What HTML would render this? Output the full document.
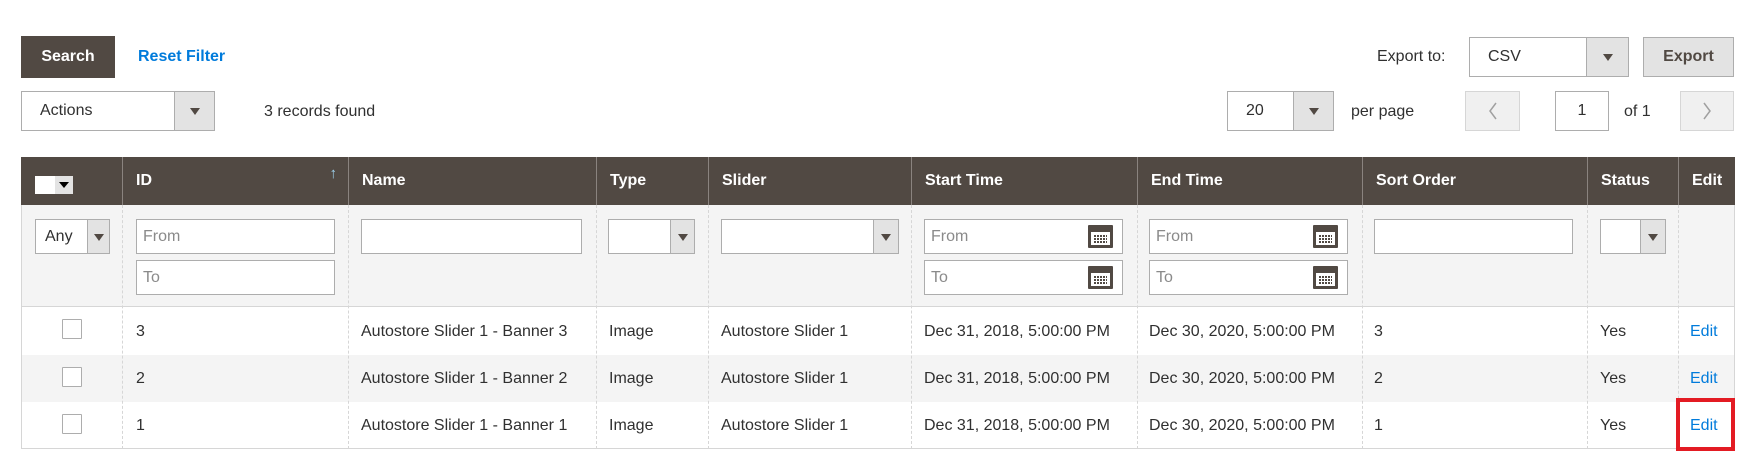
<!DOCTYPE html>
<html><head><meta charset="utf-8"><style>
*{box-sizing:border-box;margin:0;padding:0}
body{width:1758px;height:472px;background:#fff;font-family:"Liberation Sans",sans-serif;font-size:16px;color:#303030;position:relative;overflow:hidden}
.a{position:absolute}
.btn{position:absolute;display:flex;align-items:center;justify-content:center;font-weight:bold}
.sel{position:absolute;background:#fff;border:1px solid #adadad}
.sel .ar{position:absolute;top:0;right:0;bottom:0;background:#e3e3e3;border-left:1px solid #adadad}
.sel .ar:after{content:"";position:absolute;left:50%;top:50%;margin:-3px 0 0 -5px;border-left:5px solid transparent;border-right:5px solid transparent;border-top:7px solid #514943}
.sel .t{position:absolute;top:0;bottom:0;display:flex;align-items:center}
.inp{position:absolute;background:#fff;border:1px solid #adadad;height:35px;display:flex;align-items:center;padding-left:6px;color:#8a8a8a}
.cal{position:absolute;right:9px;top:5px;width:25px;height:23px;background:#514943;border-radius:1px}
.cal:before{content:"";position:absolute;left:3px;right:3px;top:7px;bottom:3px;background:#fff}
.cal:after{content:"";position:absolute;left:6px;top:10px;width:13px;height:8px;background:repeating-linear-gradient(90deg,#514943 0 2px,transparent 2px 3px),#fff;-webkit-mask:repeating-linear-gradient(0deg,#000 0 2px,transparent 2px 3px);mask:repeating-linear-gradient(0deg,#000 0 2px,transparent 2px 3px)}
.hd{position:absolute;top:157px;height:48px;background:#514943;color:#fff;font-weight:bold;display:flex;align-items:center;padding-left:13px;border-left:1px solid #8a837f}
.vl{position:absolute;top:205px;height:244px;border-left:1px dashed #d6d6d6}
.cell{position:absolute;display:flex;align-items:center;height:47px}
.cb{position:absolute;width:20px;height:20px;border:1px solid #adadad;background:#fff;border-radius:1px}
.lnk{color:#007bdb}
</style></head><body>
<div class="btn" style="left:21px;top:36px;width:94px;height:42px;background:#514943;color:#fff">Search</div>
<div class="a lnk" style="left:138px;top:48px;font-weight:bold">Reset Filter</div>
<div class="sel" style="left:21px;top:91px;width:194px;height:40px"><div class="t" style="left:18px">Actions</div><div class="ar" style="width:40px"></div></div>
<div class="a" style="left:264px;top:103px">3 records found</div>

<div class="a" style="left:1377px;top:48px">Export to:</div>
<div class="sel" style="left:1469px;top:37px;width:160px;height:40px"><div class="t" style="left:18px">CSV</div><div class="ar" style="width:42px"></div></div>
<div class="btn" style="left:1643px;top:37px;width:91px;height:40px;background:#e3e3e3;border:1px solid #adadad;color:#514943">Export</div>

<div class="sel" style="left:1227px;top:91px;width:107px;height:40px"><div class="t" style="left:18px">20</div><div class="ar" style="width:40px"></div></div>
<div class="a" style="left:1351px;top:103px">per page</div>
<div class="btn" style="left:1465px;top:91px;width:55px;height:40px;background:#f0f0f0;border:1px solid #d6d6d6"><svg width="10" height="18"><path d="M8 1 L2 9 L8 17" fill="none" stroke="#a0a0a0" stroke-width="1.5"/></svg></div>
<div class="btn" style="left:1555px;top:91px;width:54px;height:40px;background:#fff;border:1px solid #adadad;font-weight:normal">1</div>
<div class="a" style="left:1624px;top:103px">of 1</div>
<div class="btn" style="left:1680px;top:91px;width:54px;height:40px;background:#f0f0f0;border:1px solid #d6d6d6"><svg width="10" height="18"><path d="M2 1 L8 9 L2 17" fill="none" stroke="#a0a0a0" stroke-width="1.5"/></svg></div>

<div class="a" style="left:21px;top:157px;width:1714px;height:292px;border:1px solid #d6d6d6;border-top:none"></div>
<div class="a" style="left:21px;top:205px;width:1714px;height:102px;background:#f4f4f4;border-left:1px solid #d6d6d6;border-right:1px solid #d6d6d6"></div>
<div class="a" style="left:21px;top:355px;width:1714px;height:47px;background:#f4f4f4;border-left:1px solid #d6d6d6;border-right:1px solid #d6d6d6"></div>
<div class="a" style="left:21px;top:306px;width:1714px;border-top:1px solid #d6d6d6"></div>

<div class="hd" style="left:21px;width:102px;border-left:none"><div style="position:absolute;left:14px;top:19px;width:20px;height:18px;background:#fff"></div><div style="position:absolute;left:34px;top:19px;width:18px;height:18px;background:#e3e3e3"><div style="position:absolute;left:4px;top:6px;border-left:5px solid transparent;border-right:5px solid transparent;border-top:6px solid #000"></div></div></div>
<div class="hd" style="left:122px;width:227px">ID<span style="position:absolute;right:12px;top:8px;color:#9fd3f0;font-weight:normal;font-size:15px">&#8593;</span></div>
<div class="hd" style="left:348px;width:248px">Name</div>
<div class="hd" style="left:596px;width:112px">Type</div>
<div class="hd" style="left:708px;width:203px">Slider</div>
<div class="hd" style="left:911px;width:226px">Start Time</div>
<div class="hd" style="left:1137px;width:225px">End Time</div>
<div class="hd" style="left:1362px;width:225px">Sort Order</div>
<div class="hd" style="left:1587px;width:91px">Status</div>
<div class="hd" style="left:1678px;width:57px">Edit</div>

<div class="vl" style="left:122px"></div><div class="vl" style="left:348px"></div><div class="vl" style="left:596px"></div><div class="vl" style="left:708px"></div><div class="vl" style="left:911px"></div><div class="vl" style="left:1137px"></div><div class="vl" style="left:1362px"></div><div class="vl" style="left:1587px"></div><div class="vl" style="left:1678px"></div>

<div class="sel" style="left:35px;top:219px;width:75px;height:35px"><div class="t" style="left:9px;color:#303030">Any</div><div class="ar" style="width:22px"></div></div>
<div class="inp" style="left:136px;top:219px;width:199px">From</div>
<div class="inp" style="left:136px;top:260px;width:199px">To</div>
<div class="inp" style="left:361px;top:219px;width:221px"></div>
<div class="sel" style="left:608px;top:219px;width:87px;height:35px"><div class="ar" style="width:24px"></div></div>
<div class="sel" style="left:721px;top:219px;width:178px;height:35px"><div class="ar" style="width:25px"></div></div>
<div class="inp" style="left:924px;top:219px;width:199px">From<div class="cal"></div></div>
<div class="inp" style="left:924px;top:260px;width:199px">To<div class="cal"></div></div>
<div class="inp" style="left:1149px;top:219px;width:199px">From<div class="cal"></div></div>
<div class="inp" style="left:1149px;top:260px;width:199px">To<div class="cal"></div></div>
<div class="inp" style="left:1374px;top:219px;width:199px"></div>
<div class="sel" style="left:1600px;top:219px;width:66px;height:35px"><div class="ar" style="width:25px"></div></div>

<div class="cb" style="left:62px;top:319px"></div>
<div class="cb" style="left:62px;top:367px"></div>
<div class="cb" style="left:62px;top:414px"></div>

<div class="cell" style="left:136px;top:308px">3</div>
<div class="cell" style="left:361px;top:308px">Autostore Slider 1 - Banner 3</div>
<div class="cell" style="left:609px;top:308px">Image</div>
<div class="cell" style="left:721px;top:308px">Autostore Slider 1</div>
<div class="cell" style="left:924px;top:308px">Dec 31, 2018, 5:00:00 PM</div>
<div class="cell" style="left:1149px;top:308px">Dec 30, 2020, 5:00:00 PM</div>
<div class="cell" style="left:1374px;top:308px">3</div>
<div class="cell" style="left:1600px;top:308px">Yes</div>
<div class="cell lnk" style="left:1690px;top:308px">Edit</div>

<div class="cell" style="left:136px;top:355px">2</div>
<div class="cell" style="left:361px;top:355px">Autostore Slider 1 - Banner 2</div>
<div class="cell" style="left:609px;top:355px">Image</div>
<div class="cell" style="left:721px;top:355px">Autostore Slider 1</div>
<div class="cell" style="left:924px;top:355px">Dec 31, 2018, 5:00:00 PM</div>
<div class="cell" style="left:1149px;top:355px">Dec 30, 2020, 5:00:00 PM</div>
<div class="cell" style="left:1374px;top:355px">2</div>
<div class="cell" style="left:1600px;top:355px">Yes</div>
<div class="cell lnk" style="left:1690px;top:355px">Edit</div>

<div class="cell" style="left:136px;top:402px">1</div>
<div class="cell" style="left:361px;top:402px">Autostore Slider 1 - Banner 1</div>
<div class="cell" style="left:609px;top:402px">Image</div>
<div class="cell" style="left:721px;top:402px">Autostore Slider 1</div>
<div class="cell" style="left:924px;top:402px">Dec 31, 2018, 5:00:00 PM</div>
<div class="cell" style="left:1149px;top:402px">Dec 30, 2020, 5:00:00 PM</div>
<div class="cell" style="left:1374px;top:402px">1</div>
<div class="cell" style="left:1600px;top:402px">Yes</div>
<div class="cell lnk" style="left:1690px;top:402px">Edit</div>

<div class="a" style="left:1676px;top:398px;width:59px;height:53px;border:4px solid #e31b23"></div>
</body></html>
